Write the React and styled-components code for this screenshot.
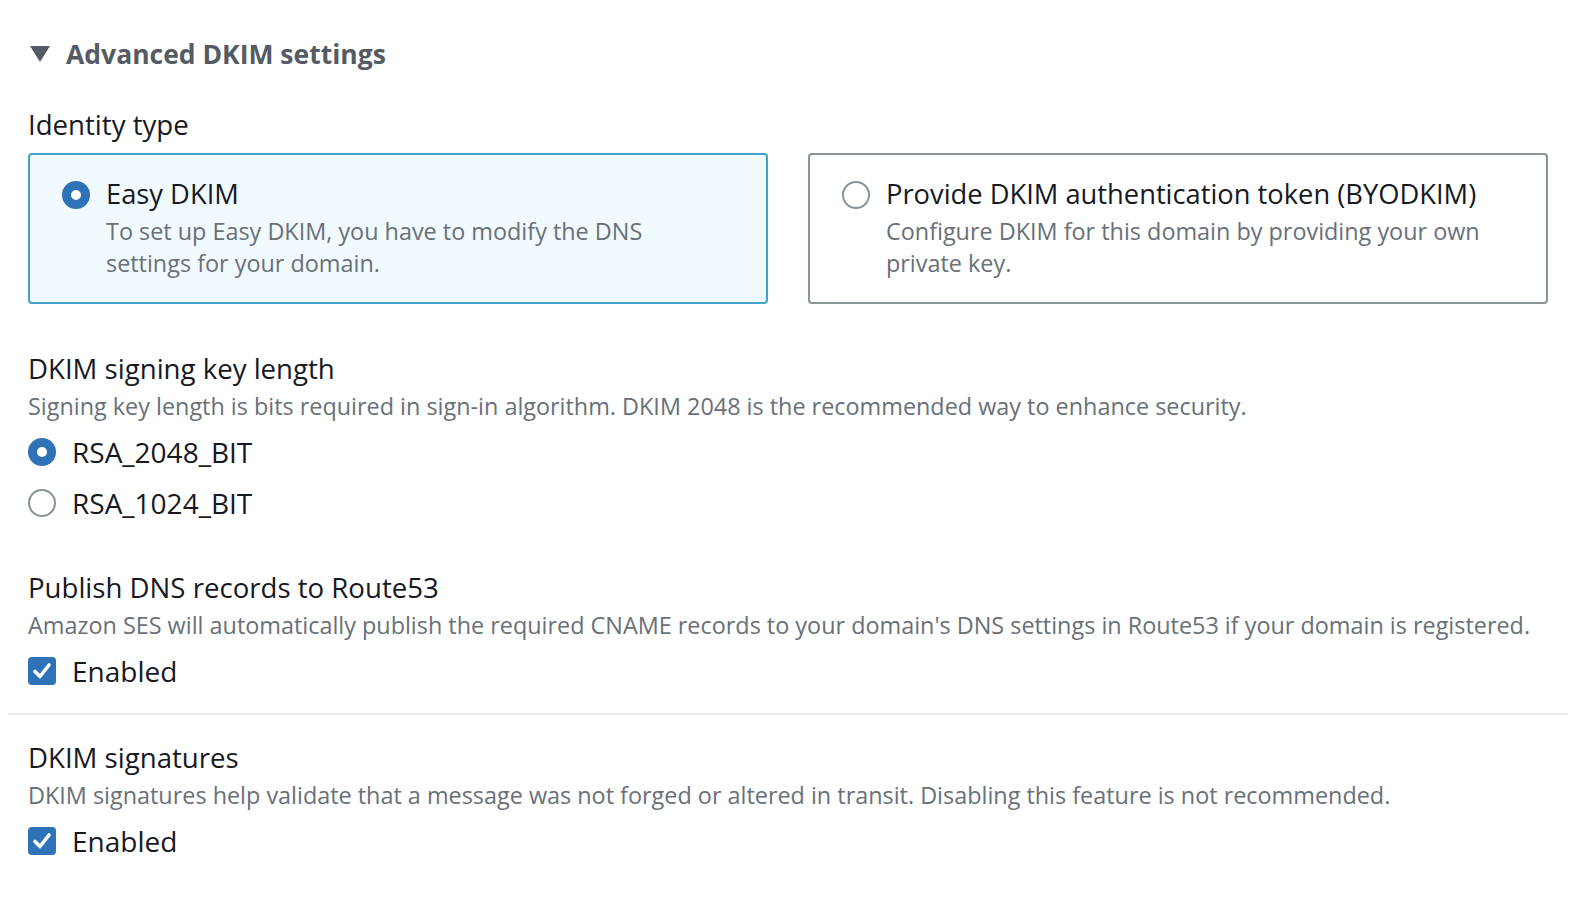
import React from "react";
import styled, { createGlobalStyle } from "styled-components";

const GlobalStyle = createGlobalStyle`
  body {
    margin: 0;
    background: #ffffff;
    font-family: "Open Sans", "Noto Sans", sans-serif;
    color: #16191f;
    overflow: hidden;
  }
`;

const Page = styled.div`
  width: 1576px;
  padding: 34px 0 0 0;
  box-sizing: border-box;
`;

const Section = styled.div`
  padding: 0 28px 0 28px;
`;

const Header = styled.div`
  display: flex;
  align-items: center;
  gap: 16px;
  padding-left: 2px;
  height: 40px;
`;

const Caret = styled.span`
  width: 0;
  height: 0;
  border-left: 10px solid transparent;
  border-right: 10px solid transparent;
  border-top: 16px solid #545b64;
`;

const HeaderTitle = styled.h2`
  margin: 0;
  font-size: 26.5px;
  font-weight: 700;
  color: #545b64;
`;

const Label = styled.div`
  font-size: 27.6px;
  line-height: 38px;
  color: #16191f;
  margin-top: ${(p) => p.$top || 0}px;
`;

const Description = styled.div`
  font-size: 23.4px;
  line-height: 38px;
  color: #687078;
`;

const Tiles = styled.div`
  display: grid;
  grid-template-columns: 1fr 1fr;
  gap: 40px;
  margin-top: 10px;
`;

const Tile = styled.div`
  height: 151px;
  box-sizing: border-box;
  border: 2px solid ${(p) => (p.$selected ? "#44a1c9" : "#879596")};
  background: ${(p) => (p.$selected ? "#f1faff" : "#ffffff")};
  border-radius: 4px;
  padding: 21px 32px 0 32px;
  display: flex;
  gap: 16px;
`;

const TileBody = styled.div`
  display: flex;
  flex-direction: column;
  gap: 3px;
`;

const TileTitle = styled.div`
  font-size: 27.3px;
  line-height: 36px;
  color: #16191f;
`;

const TileText = styled.div`
  font-size: 23.4px;
  line-height: 32px;
  color: #687078;
`;

const Radio = styled.span`
  flex: none;
  width: 28px;
  height: 28px;
  box-sizing: border-box;
  border-radius: 50%;
  margin-top: ${(p) => (p.$inTile ? 5 : 0)}px;
  border: ${(p) => (p.$checked ? "9px solid #2f72b8" : "2px solid #879596")};
  background: #ffffff;
`;

const OptionList = styled.div`
  display: flex;
  flex-direction: column;
  gap: 13px;
  margin-top: 8px;
`;

const Option = styled.div`
  display: flex;
  align-items: center;
  gap: 16px;
  height: 38px;
  font-size: 28px;
  color: #16191f;
`;

const Box = styled.span`
  flex: none;
  width: 28px;
  height: 28px;
  border-radius: 4px;
  background: #2f72b8;
  display: flex;
  align-items: center;
  justify-content: center;
`;

const Divider = styled.hr`
  margin: 23px 8px 0 8px;
  border: none;
  border-top: 2px solid #eaeded;
`;

const Check = () => (
  <Box>
    <svg width="22" height="22" viewBox="0 0 22 22">
      <path d="M4 11.5 L9 16.5 L18 5" fill="none" stroke="#fff" strokeWidth="3.6" strokeLinecap="round" strokeLinejoin="round" />
    </svg>
  </Box>
);

export default function App() {
  return (
    <Page>
      <GlobalStyle />
      <Section>
        <Header>
          <Caret />
          <HeaderTitle>Advanced DKIM settings</HeaderTitle>
        </Header>
        <Label $top={31}>Identity type</Label>
        <Tiles>
          <Tile $selected>
            <Radio $checked $inTile />
            <TileBody>
              <TileTitle>Easy DKIM</TileTitle>
              <TileText>
                To set up Easy DKIM, you have to modify the DNS
                <br />
                settings for your domain.
              </TileText>
            </TileBody>
          </Tile>
          <Tile>
            <Radio $inTile />
            <TileBody>
              <TileTitle>Provide DKIM authentication token (BYODKIM)</TileTitle>
              <TileText>
                Configure DKIM for this domain by providing your own
                <br />
                private key.
              </TileText>
            </TileBody>
          </Tile>
        </Tiles>

        <Label $top={45}>DKIM signing key length</Label>
        <Description>
          Signing key length is bits required in sign-in algorithm. DKIM 2048 is the recommended way to enhance security.
        </Description>
        <OptionList>
          <Option>
            <Radio $checked />
            RSA_2048_BIT
          </Option>
          <Option>
            <Radio />
            RSA_1024_BIT
          </Option>
        </OptionList>

        <Label $top={46}>Publish DNS records to Route53</Label>
        <Description>
          Amazon SES will automatically publish the required CNAME records to your domain's DNS settings in Route53 if your domain is registered.
        </Description>
        <OptionList>
          <Option>
            <Check />
            Enabled
          </Option>
        </OptionList>
      </Section>

      <Divider />

      <Section>
        <Label $top={23}>DKIM signatures</Label>
        <Description>
          DKIM signatures help validate that a message was not forged or altered in transit. Disabling this feature is not recommended.
        </Description>
        <OptionList>
          <Option>
            <Check />
            Enabled
          </Option>
        </OptionList>
      </Section>
    </Page>
  );
}
